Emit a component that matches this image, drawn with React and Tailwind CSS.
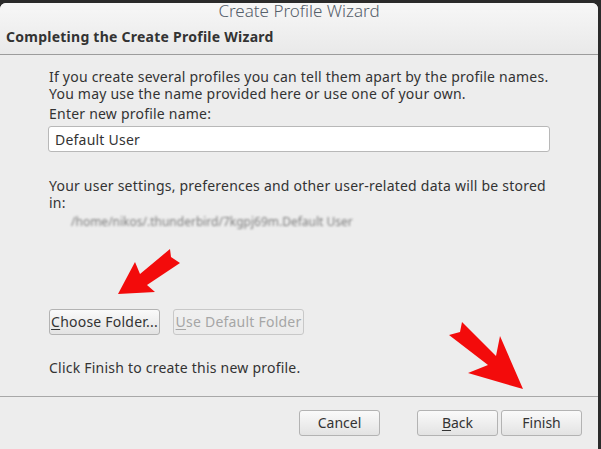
import React from 'react';

const font = { fontFamily: '"Noto Sans", "DejaVu Sans", sans-serif' };

function Button({ children, disabled, className = '' }) {
  return (
    <button
      disabled={disabled}
      className={`h-[26px] rounded-[3px] border text-[14px] leading-none bg-gradient-to-b ${
        disabled
          ? 'border-[#c8c8c8] from-[#f0f0f0] to-[#ebebeb] text-[#a6a6a6]'
          : 'border-[#b3b3b3] from-[#fafafa] to-[#e3e3e3] text-[#333]'
      } ${className}`}
    >
      {children}
    </button>
  );
}

function Arrows() {
  return (
    <svg className="absolute inset-0 pointer-events-none" width="601" height="449">
      <polygon
        fill="#f30b0b"
        points="118,294 135,262 140,274 170,249 171,257 180,263 147,285 155,292"
      />
      <polygon
        fill="#f30b0b"
        points="523,389 468,373 488,365 449,335 460,332 462,322 496,356 500,336"
      />
    </svg>
  );
}

export default function App() {
  return (
    <div className="relative w-[601px] h-[449px] bg-[#2b2b2b] overflow-hidden" style={font}>
      <div className="mt-[3px] mr-[3px] h-[446px] rounded-t-[6px] bg-[#ededed] flex flex-col">
        {/* header */}
        <div className="h-[52px] rounded-t-[6px] bg-gradient-to-b from-[#f7f7f7] to-[#e9e9e9] border-b border-[#9c9c9c] flex flex-col">
          <div className="h-[19px] leading-[15px] text-center text-[17px] text-[#56606b] font-light">
            Create Profile Wizard
          </div>
          <div className="pl-[6px] pt-[6px] leading-[17px] text-[14px] tracking-[0.25px] font-bold text-[#333]">
            Completing the Create Profile Wizard
          </div>
        </div>

        {/* body */}
        <div className="flex-1 pl-[49px] pr-[40px] pt-[13px] text-[14px] tracking-[0.22px] text-[#333] border-b border-[#a8a8a8]">
          <div className="leading-[17px] whitespace-nowrap">
            <div>If you create several profiles you can tell them apart by the profile names.</div>
            <div>You may use the name provided here or use one of your own.</div>
          </div>
          <div className="mt-[3px] leading-[17px]">Enter new profile name:</div>
          <div className="mt-[4px] -ml-px w-[502px] h-[26px] bg-white border border-[#b8b8b8] rounded-[3px] flex items-center pl-[6px]">
            Default User
          </div>
          <div className="mt-[25px] leading-[17px] whitespace-nowrap">
            <div>Your user settings, preferences and other user-related data will be stored</div>
            <div>in:</div>
          </div>
          <div className="mt-[2px] pl-[22px] leading-[17px] text-[#7e7e7e] blur-[1.3px] text-[12px] tracking-normal">
            /home/nikos/.thunderbird/7kgpj69m.Default User
          </div>
          <div className="mt-[79px] flex gap-[13px]">
            <Button className="w-[111px]">
              <u className="underline-offset-2">C</u>hoose Folder...
            </Button>
            <Button disabled className="w-[131px]">
              <u className="underline-offset-2">U</u>se Default Folder
            </Button>
          </div>
          <div className="mt-[24px] leading-[17px]">Click Finish to create this new profile.</div>
        </div>

        {/* footer */}
        <div className="h-[52px] flex items-start pt-[13px] pl-[299px]">
          <Button className="w-[81px]">Cancel</Button>
          <Button className="w-[81px] ml-[37px]">
            <u className="underline-offset-2">B</u>ack
          </Button>
          <Button className="w-[81px] ml-[3px]">Finish</Button>
        </div>
      </div>
      <Arrows />
    </div>
  );
}
